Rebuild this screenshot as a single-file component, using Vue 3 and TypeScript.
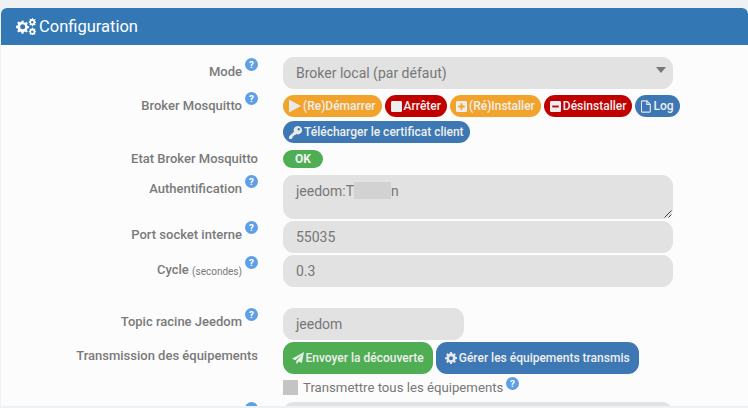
<script setup lang="ts">
const helpPath = 'M8 0a8 8 0 1 0 0 16A8 8 0 0 0 8 0z'
</script>

<template>
  <div class="page">
    <section class="panel">
      <header class="heading">
        <svg class="gears" viewBox="0 0 24 20" width="20" height="16.700">
          <g fill="#fff">
            <path fill-rule="evenodd" d="M7 3.2l1.9-.1.5 2 1.4.6 1.8-1 1.5 1.5-1 1.8.6 1.4 2 .5v2.2l-2 .5-.6 1.4 1 1.8-1.5 1.5-1.8-1-1.4.6-.5 2H6.700l-.5-2-1.400-.6-1.800 1-1.500-1.500 1-1.800-.6-1.400-2-.5V9.400l2-.5.6-1.400-1-1.800L3 4.200l1.800 1 1.400-.6zM8 7.400a3 3 0 1 0 0 6 3 3 0 0 0 0-6z" />
            <path fill-rule="evenodd" d="M19.500 0l1 .2.2 1.200 1 .4 1-.6.8 1-.7 1 .3 1 1 .3v1.200l-1 .3-.3 1 .7 1-.9 .9-1-.6-1 .4-.2 1.100h-1.200l-.3-1.100-1-.4-1 .6-.8-.9.6-1-.4-1-1-.3V4.300l1-.3.4-1-.6-1 .8-1 1 .6 1-.4zM19.500 3.700a1.500 1.500 0 1 0 0 3 1.500 1.500 0 0 0 0-3z" />
            <path fill-rule="evenodd" d="M19.500 11.500l1 .2.2 1 1 .4 1-.5.8.9-.7 1 .3 1 1 .3v1.100l-1 .3-.3 1 .6.900-.8.900-1-.6-1 .4-.2 1h-1.200l-.3-1-1-.4-1 .6-.8-.9.6-.9-.4-1-1-.3v-1.100l1-.3.4-1-.6-1 .8-.9 1 .5 1-.4zM19.500 15a1.500 1.500 0 1 0 0 3 1.500 1.500 0 0 0 0-3z" />
          </g>
        </svg>
        <h1 class="title">Configuration</h1>
      </header>

      <div class="body">
        <div class="row row-mode">
          <div class="label">Mode<svg class="help" viewBox="0 0 16 16"><path :d="helpPath" /><text x="8" y="12" text-anchor="middle">?</text></svg></div>
          <div class="control">
            <div class="field select">Broker local (par défaut)<span class="caret"></span></div>
          </div>
        </div>

        <div class="row row-broker">
          <div class="label">Broker Mosquitto<svg class="help" viewBox="0 0 16 16"><path :d="helpPath" /><text x="8" y="12" text-anchor="middle">?</text></svg></div>
          <div class="control pills">
            <a class="pill orange">
              <svg class="ico" viewBox="0 0 14 16" width="12" height="14"><path d="M0 0.500 14 8 0 15.500z" fill="#e9e9e9" /></svg>(Re)Démarrer
            </a>
            <a class="pill red">
              <svg class="ico" viewBox="0 0 12 12" width="11" height="11"><rect width="12" height="12" rx="1.500" fill="#eee" /></svg>Arrêter
            </a>
            <a class="pill orange">
              <svg class="ico" viewBox="0 0 12 12" width="11" height="11"><rect width="12" height="12" rx="1.500" fill="#eee" /><path d="M5 2.500h2V5h2.500v2H7v2.500H5V7H2.500V5H5z" fill="#f2a32b" /></svg>(Ré)Installer
            </a>
            <a class="pill red">
              <svg class="ico" viewBox="0 0 12 12" width="11" height="11"><rect width="12" height="12" rx="1.500" fill="#eee" /><rect x="2.500" y="5" width="7" height="2" fill="#c00000" /></svg>Désinstaller
            </a>
            <a class="pill blue">
              <svg class="ico" viewBox="0 0 12 15" width="10" height="13"><path d="M1.500 .8h5.500l4.200 4.200v8.200a1 1 0 0 1-1 1H1.500a1 1 0 0 1-1-1V1.800a1 1 0 0 1 1-1z" fill="none" stroke="#e6e6e6" stroke-width="1.400" /><path d="M7 1v4h4" fill="none" stroke="#e6e6e6" stroke-width="1.400" /></svg>Log
            </a>
            <a class="pill blue">
              <svg class="ico" viewBox="0 0 14 14" width="13" height="13"><path fill-rule="evenodd" d="M9.500 0a4.500 4.500 0 1 1-1.600 8.700L7 9.600H5.500V11H4v1.500L2.800 14H.5L0 13.500v-2.300l5.300-5.100A4.500 4.500 0 0 1 9.500 0zM10.500 2.200a1.300 1.300 0 1 0 0 2.600 1.300 1.300 0 0 0 0-2.600z" fill="#e9e9e9" /></svg>Télécharger le certificat client
            </a>
          </div>
        </div>

        <div class="row row-etat">
          <div class="label nohelp">Etat Broker Mosquitto</div>
          <div class="control"><span class="ok">OK</span></div>
        </div>

        <div class="row row-auth">
          <div class="label">Authentification<svg class="help" viewBox="0 0 16 16"><path :d="helpPath" /><text x="8" y="12" text-anchor="middle">?</text></svg></div>
          <div class="control">
            <div class="field area">jeedom:T<span class="blurred"></span>n
              <svg class="grip" viewBox="0 0 8 8" width="8" height="8"><path d="M7.500 .5 .5 7.500M7.500 4.500 4.500 7.500" stroke="#444" stroke-width="1" fill="none" /></svg>
            </div>
          </div>
        </div>

        <div class="row row-port">
          <div class="label">Port socket interne<svg class="help" viewBox="0 0 16 16"><path :d="helpPath" /><text x="8" y="12" text-anchor="middle">?</text></svg></div>
          <div class="control"><div class="field">55035</div></div>
        </div>

        <div class="row row-cycle">
          <div class="label"><span>Cycle <small class="unit">(secondes)</small></span><svg class="help" viewBox="0 0 16 16"><path :d="helpPath" /><text x="8" y="12" text-anchor="middle">?</text></svg></div>
          <div class="control"><div class="field">0.3</div></div>
        </div>

        <div class="row row-topic">
          <div class="label">Topic racine Jeedom<svg class="help" viewBox="0 0 16 16"><path :d="helpPath" /><text x="8" y="12" text-anchor="middle">?</text></svg></div>
          <div class="control"><div class="field short">jeedom</div></div>
        </div>

        <div class="row row-trans">
          <div class="label nohelp">Transmission des équipements</div>
          <div class="control">
            <div class="bigs">
              <a class="big green">
                <svg class="ico" viewBox="0 0 14 14" width="12" height="12"><path fill-rule="evenodd" d="M14 0 11.500 12.800 7.800 11.200 5.800 13.800 5 13.800V10.500L11.500 3 3.800 9.500 0 8z" fill="#e6efe6" /></svg>Envoyer la découverte
              </a>
              <a class="big blue">
                <svg class="ico" viewBox="0 0 16 16" width="12" height="12"><path fill-rule="evenodd" fill="#e9e9e9" d="M6.800 0h2.400l.4 2.100 1.400.6L12.800 1.500l1.700 1.700-1.200 1.800.6 1.400 2.100.4v2.400l-2.100.4-.6 1.400 1.200 1.800-1.700 1.700-1.800-1.200-1.400.6-.4 2.100H6.800l-.4-2.100-1.400-.6-1.800 1.200-1.700-1.700 1.200-1.800-.6-1.400L0 9.600V7.200l2.100-.4.600-1.400L1.500 3.200l1.700-1.700L5 2.700l1.400-.6zM8 5.500a2.700 2.700 0 1 0 0 5.400 2.700 2.700 0 0 0 0-5.400z" /></svg>Gérer les équipements transmis
              </a>
            </div>
            <div class="check">
              <span class="box"></span>
              <span class="check-text">Transmettre tous les équipements</span>
              <svg class="help check-help" viewBox="0 0 16 16"><path :d="helpPath" /><text x="8" y="12" text-anchor="middle">?</text></svg>
            </div>
          </div>
        </div>

        <div class="row row-next">
          <div class="label"><svg class="help" viewBox="0 0 16 16"><path :d="helpPath" /></svg></div>
          <div class="control"><div class="field next"></div></div>
        </div>
      </div>
    </section>
  </div>
</template>

<style>
html, body { margin: 0; padding: 0; background: #f0f1f3; }
</style>

<style scoped>
.page {
  width: 748px;
  height: 408px;
  overflow: hidden;
  box-sizing: border-box;
  padding: 8px 0 0 1px;
  font-family: Roboto, "Liberation Sans", sans-serif;
}
.panel {
  height: 398px;
  background: #fcfcfc;
  border-radius: 6px 6px 0 0;
  overflow: hidden;
}
.heading {
  height: 37px;
  background: #3377b5;
  display: flex;
  align-items: center;
  padding-left: 14.500px;
  gap: 3.500px;
  color: #fff;
}
.title {
  margin: 1px 0 0;
  font-size: 16.500px;
  font-weight: 400;
  line-height: 20px;
}
.body { padding-top: 12px; }
.row { display: flex; }
.label {
  width: 257px;
  flex: none;
  display: flex;
  justify-content: flex-end;
  align-items: flex-start;
  font-size: 13px;
  font-weight: 500;
  color: #7a7a7a;
  line-height: 16px;
  white-space: nowrap;
}
.control { margin-left: 25px; width: 465px; }
.help {
  width: 13px;
  height: 13px;
  fill: #5f9fe8;
  flex: none;
  margin-left: 3px;
  margin-top: -6px;
}
.help text {
  fill: #fff;
  font-size: 12px;
  font-weight: 700;
  font-family: Roboto, sans-serif;
}
.unit { font-size: 10px; font-weight: 400; vertical-align: -1px; }
.field {
  position: relative;
  box-sizing: border-box;
  width: 390px;
  height: 32px;
  background: #e1e2e1;
  border-radius: 11px;
  padding: 0 13px;
  line-height: 32px;
  font-size: 14px;
  color: #777;
}
.field.short { width: 181px; }
.select .caret {
  position: absolute;
  right: 7px;
  top: 10px;
  border-style: solid;
  border-width: 6px 5px 0;
  border-color: #777 transparent transparent;
}
.area { height: 44px; line-height: 32px; }
.blurred {
  display: inline-block;
  width: 37px;
  height: 17px;
  vertical-align: -3px;
  background: #d2d2d2;
  filter: blur(.6px);
}
.grip { position: absolute; right: 1px; bottom: 1px; }
.pills {
  display: flex;
  flex-wrap: wrap;
  align-content: flex-start;
  gap: 4px 3px;
  width: 410px;
}
.pill {
  display: inline-flex;
  align-items: center;
  box-sizing: border-box;
  height: 22px;
  padding: 0 6px;
  border-radius: 11px;
  font-size: 12px;
  font-weight: 500;
  color: #efefef;
  white-space: nowrap;
}
.ico { margin-right: 2px; flex: none; }
.orange { background: #f2a32b; }
.red { background: #c00000; }
.blue { background: #3d78b4; }
.green { background: #4fad53; }
.ok {
  display: block;
  width: 40px;
  height: 18px;
  background: #4fad53;
  color: #f2f2f2;
  border-radius: 9px;
  font-size: 12px;
  font-weight: 700;
  line-height: 18px;
  text-align: center;
}
.bigs { display: flex; gap: 3px; }
.big {
  display: inline-flex;
  align-items: center;
  box-sizing: border-box;
  height: 32px;
  padding: 0 9.500px 0 8.500px;
  border-radius: 11px;
  font-size: 12px;
  font-weight: 500;
  color: #efefef;
  white-space: nowrap;
}
.check {
  display: flex;
  align-items: center;
  margin-top: 6px;
  height: 15px;
}
.box { width: 15px; height: 15px; background: #c4c4c4; flex: none; }
.check-text { margin-left: 5px; font-size: 13.200px; color: #777; line-height: 15px; }
.check-help { margin-top: -8px; margin-left: 3px; }
.row-mode { height: 38px; }
.row-mode .label { padding-top: 7px; }
.row-broker { height: 55px; }
.row-broker .label { padding-top: 3px; }
.row-etat { height: 25px; }
.row-etat .label { padding-top: 1px; }
.row-auth { height: 46px; }
.row-auth .label { padding-top: 6px; }
.row-port { height: 34px; }
.row-port .label { padding-top: 6px; }
.row-cycle { height: 53px; }
.row-cycle .label { padding-top: 7px; }
.row-topic { height: 34px; }
.row-topic .label { padding-top: 6px; }
.row-trans { height: 60px; }
.row-trans .label { padding-top: 6px; }
.row-next .help { margin-top: 0; }
.next { height: 32px; }
</style>
